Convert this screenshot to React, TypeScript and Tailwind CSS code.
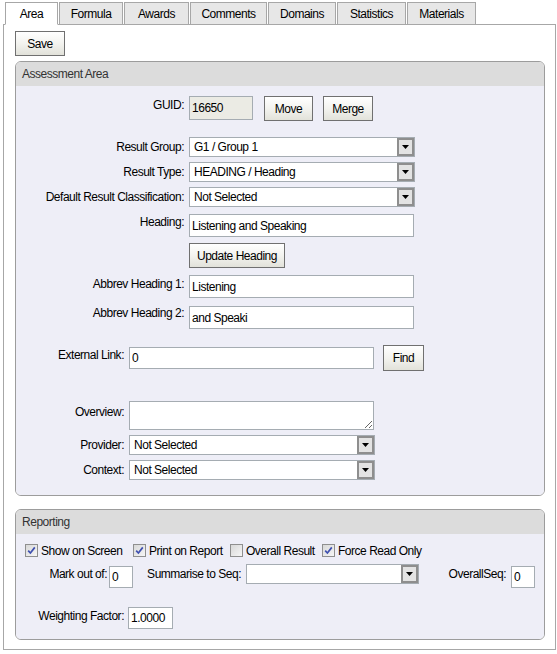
import type { ReactNode } from "react";

const tabs = [
  { label: "Area", w: "w-[53px]", active: true },
  { label: "Formula", w: "w-[64px]" },
  { label: "Awards", w: "w-[65px]" },
  { label: "Comments", w: "w-[77px]" },
  { label: "Domains", w: "w-[68px]" },
  { label: "Statistics", w: "w-[69px]" },
  { label: "Materials", w: "w-[69px]" },
];

const Btn = ({ children, className = "" }: { children: ReactNode; className?: string }) => (
  <button
    type="button"
    className={`flex shrink-0 items-center justify-center border border-[#707070] bg-linear-to-b from-white via-[#f3f3ef] to-[#e2e2da] leading-[14px] text-black ${className}`}
  >
    {children}
  </button>
);

const TextBox = ({ value, className = "" }: { value: string; className?: string }) => (
  <input
    readOnly
    value={value}
    className={`shrink-0 border border-[#a5acb2] bg-white px-[2px] text-black outline-none ${className}`}
  />
);

const Select = ({ value, className = "" }: { value: string; className?: string }) => (
  <div className={`flex h-[20px] shrink-0 items-stretch border border-[#a5acb2] bg-white ${className}`}>
    <span className="flex-1 truncate pl-[4px] leading-[18px]">{value}</span>
    <span className="flex w-[17px] items-center justify-center border-2 border-[#8e8e8e] bg-[#e3e3e3]">
      <svg width="7" height="4" viewBox="0 0 7 4">
        <path d="M0 0h7L3.5 4z" fill="#000" />
      </svg>
    </span>
  </div>
);

const Check = ({ checked }: { checked?: boolean }) => (
  <span className="flex h-[13px] w-[13px] shrink-0 items-center justify-center border border-[#8f8f8f] bg-linear-to-br from-[#d8d8d8] to-[#f6f6f6]">
    {checked && (
      <svg width="9" height="9" viewBox="0 0 9 9">
        <path d="M1.2 4.6 3.4 7 7.8 1.4" stroke="#3f50b0" strokeWidth="1.7" fill="none" />
      </svg>
    )}
  </span>
);

const Label = ({ children, className = "" }: { children?: ReactNode; className?: string }) => (
  <div className={`shrink-0 text-right leading-[14px] ${className}`}>{children}</div>
);

const Panel = ({ title, children, className = "" }: { title: string; children: ReactNode; className?: string }) => (
  <div className={`w-[530px] overflow-hidden rounded-[6px] border border-[#9c9c9c] ${className}`}>
    <div className="flex h-[24px] items-center bg-[#dcdcdc] pl-[6px] text-[#333]">{title}</div>
    <div className="bg-[#eeeef7]">{children}</div>
  </div>
);

export default function App() {
  return (
    <div className="h-[654px] w-[557px] overflow-hidden bg-white pt-[2px] font-['Liberation_Sans',Arial,sans-serif] text-[12px] tracking-[-0.04em] text-black">
      {/* Tabs */}
      <div className="relative z-10 -mb-px ml-[5px] flex gap-px">
        {tabs.map((t) => (
          <div
            key={t.label}
            className={`flex h-[23px] items-center justify-center border border-[#a7a7a7] pt-px ${t.w} ${
              t.active ? "border-b-white bg-white" : "bg-[#e7e7e7]"
            }`}
          >
            {t.label}
          </div>
        ))}
      </div>

      <div className="ml-[3px] h-[626px] w-[553px] border border-[#a7a7a7] pl-[11px] pt-[6px]">
        <Btn className="h-[25px] w-[50px]">Save</Btn>

        {/* Assessment Area */}
        <Panel title="Assessment Area" className="mt-[5px]">
          <div className="flex flex-col pb-[15px]">
            <div className="mt-[10px] flex h-[25px] items-start">
              <Label className="w-[168px] pt-[2px]">GUID:</Label>
              <TextBox value="16650" className="ml-[5px] h-[24px] w-[64px] bg-[#ebebe4]! text-[#2a1a4a]" />
              <Btn className="ml-[11px] h-[25px] w-[49px]">Move</Btn>
              <Btn className="ml-[10px] h-[25px] w-[50px]">Merge</Btn>
            </div>

            <div className="mt-[16px] flex items-start">
              <Label className="w-[168px] pt-[3px]">Result Group:</Label>
              <Select value="G1 / Group 1" className="ml-[5px] w-[226px]" />
            </div>
            <div className="mt-[5px] flex items-start">
              <Label className="w-[168px] pt-[3px]">Result Type:</Label>
              <Select value="HEADING / Heading" className="ml-[5px] w-[226px]" />
            </div>
            <div className="mt-[5px] flex items-start">
              <Label className="w-[168px] pt-[3px]">Default Result Classification:</Label>
              <Select value="Not Selected" className="ml-[5px] w-[226px]" />
            </div>

            <div className="mt-[7px] flex items-start">
              <Label className="w-[168px] pt-[1px]">Heading:</Label>
              <TextBox value="Listening and Speaking" className="ml-[5px] h-[23px] w-[225px]" />
            </div>
            <div className="mt-[6px] flex items-start">
              <Label className="w-[168px]" />
              <Btn className="ml-[5px] h-[25px] w-[96px]">Update Heading</Btn>
            </div>
            <div className="mt-[7px] flex items-start">
              <Label className="w-[168px] pt-[2px]">Abbrev Heading 1:</Label>
              <TextBox value="Listening" className="ml-[5px] h-[23px] w-[225px]" />
            </div>
            <div className="mt-[8px] flex items-start">
              <Label className="w-[168px]">Abbrev Heading 2:</Label>
              <TextBox value="and Speaki" className="ml-[5px] h-[23px] w-[225px]" />
            </div>

            <div className="mt-[16px] flex items-start">
              <Label className="w-[108px] pt-[3px]">External Link:</Label>
              <TextBox value="0" className="ml-[5px] mt-[2px] h-[22px] w-[245px]" />
              <Btn className="ml-[9px] h-[26px] w-[41px]">Find</Btn>
            </div>

            <div className="mt-[30px] flex items-start">
              <Label className="w-[108px] pt-[4px]">Overview:</Label>
              <textarea
                readOnly
                className="ml-[5px] h-[29px] w-[245px] shrink-0 border border-[#a5acb2] bg-white outline-none"
              />
            </div>
            <div className="mt-[5px] flex items-start">
              <Label className="w-[108px] pt-[3px]">Provider:</Label>
              <Select value="Not Selected" className="ml-[5px] w-[246px]" />
            </div>
            <div className="mt-[5px] flex items-start">
              <Label className="w-[108px] pt-[3px]">Context:</Label>
              <Select value="Not Selected" className="ml-[5px] w-[246px]" />
            </div>
          </div>
        </Panel>

        {/* Reporting */}
        <Panel title="Reporting" className="mt-[13px]">
          <div className="flex flex-col pb-[10px]">
            <div className="mt-[10px] flex items-start pl-[9px]">
              <div className="flex w-[108px] items-start">
                <Check checked />
                <span className="ml-[3px] leading-[14px]">Show on Screen</span>
              </div>
              <div className="flex w-[97px] items-start">
                <Check checked />
                <span className="ml-[3px] leading-[14px]">Print on Report</span>
              </div>
              <div className="flex w-[92px] items-start">
                <Check />
                <span className="ml-[3px] leading-[14px]">Overall Result</span>
              </div>
              <div className="flex items-start">
                <Check checked />
                <span className="ml-[3px] leading-[14px]">Force Read Only</span>
              </div>
            </div>

            <div className="mt-[6px] flex h-[24px] items-start">
              <Label className="w-[91px] pt-[3px]">Mark out of:</Label>
              <TextBox value="0" className="ml-[2px] mt-[2px] h-[22px] w-[24px]" />
              <Label className="w-[108px] pt-[3px]">Summarise to Seq:</Label>
              <Select value="" className="ml-[5px] w-[173px]" />
              <Label className="w-[87px] pt-[3px]">OverallSeq:</Label>
              <TextBox value="0" className="ml-[5px] mt-[2px] h-[22px] w-[24px]" />
            </div>

            <div className="mt-[19px] flex items-start">
              <Label className="w-[108px] pt-[2px]">Weighting Factor:</Label>
              <TextBox value="1.0000" className="ml-[4px] h-[22px] w-[45px]" />
            </div>
          </div>
        </Panel>
      </div>
    </div>
  );
}
